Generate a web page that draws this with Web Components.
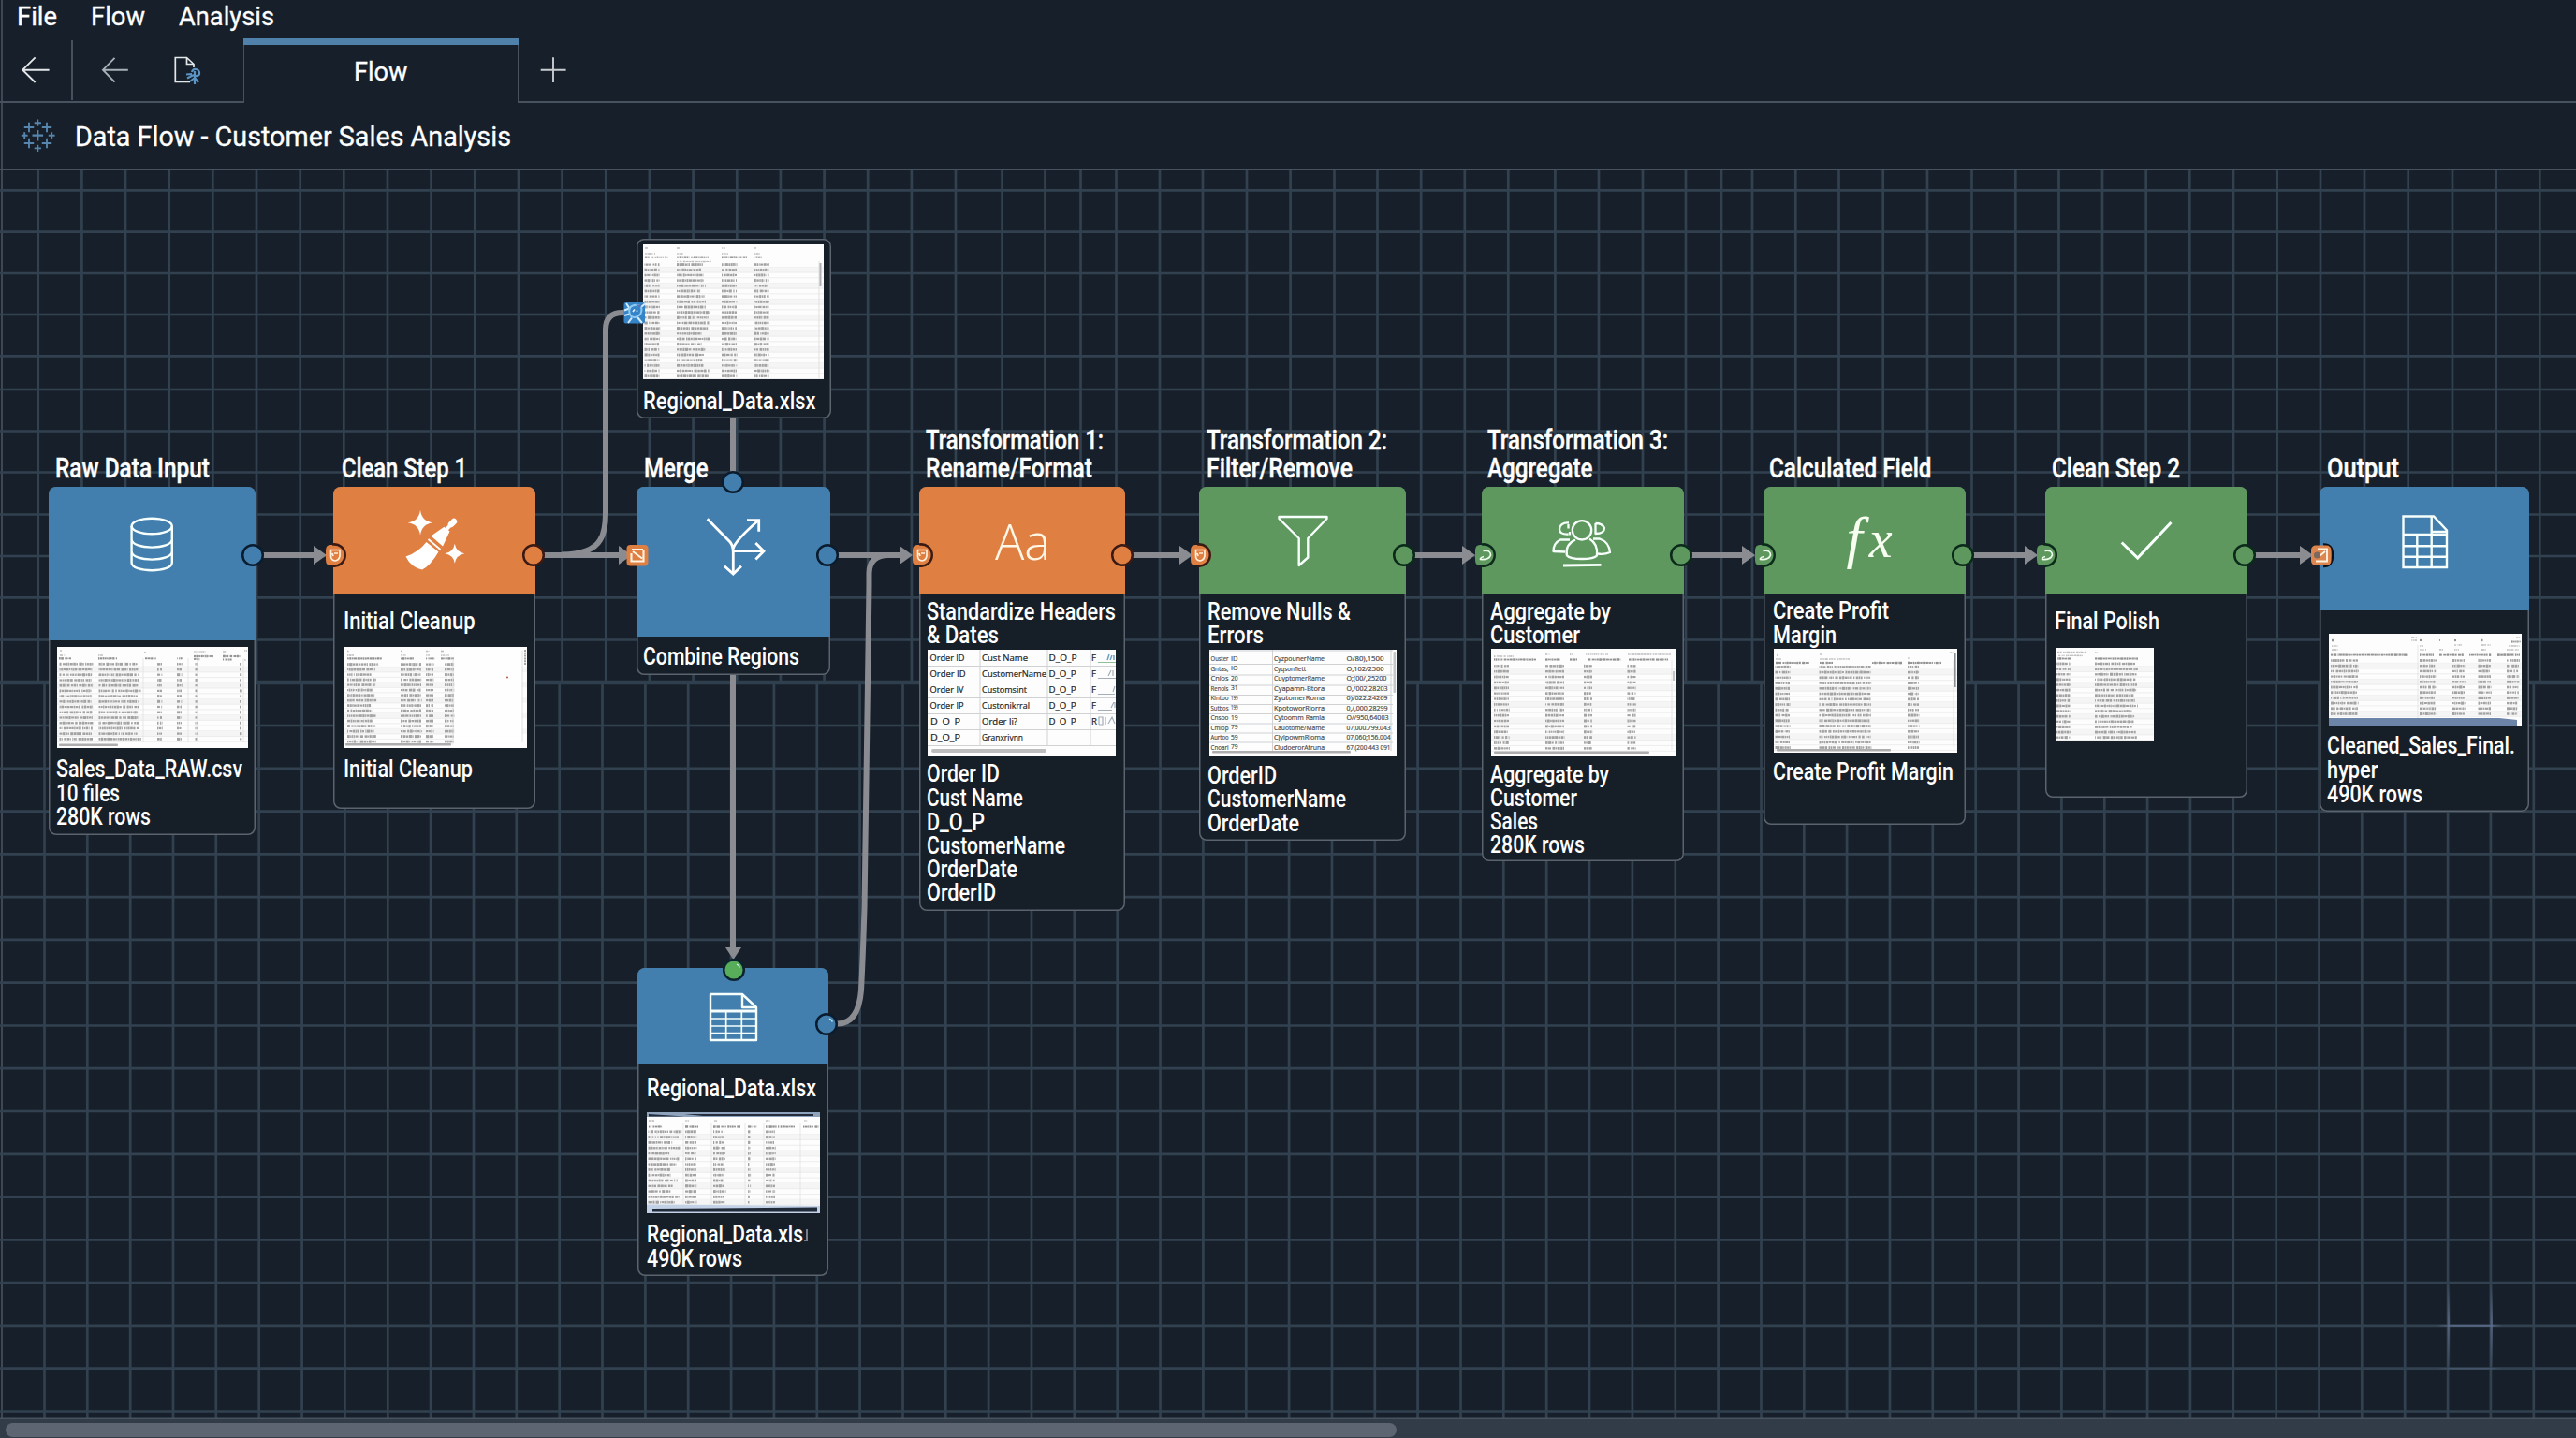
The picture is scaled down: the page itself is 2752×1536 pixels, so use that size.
<!DOCTYPE html>
<html lang="en">
<head>
<meta charset="utf-8">
<title>Data Flow - Customer Sales Analysis</title>
<style>
html,body{margin:0;height:100%;background:#17202a;overflow:hidden}
body{font-family:Roboto,"Liberation Sans",sans-serif;color:#fff}
</style>
</head>
<body>
<flow-app></flow-app>
<script>
const define = (name, cls) => customElements.define(name, cls);
const BLUE = '#427fae', ORANGE = '#e07f42', GREEN = '#5e985e', WIRE = '#8b8c92';

/* One line of text condensed to a given width */
define('fit-line', class extends HTMLElement {
  connectedCallback() {
    if (this.shadowRoot) return;
    this.attachShadow({mode: 'open'}).innerHTML = `<style>
      :host{display:block;white-space:pre;width:0}
      span{display:inline-block;transform-origin:0 50%;margin-left:-1px}
    </style><span><slot></slot></span>`;
    const w = +this.getAttribute('w');
    const span = this.shadowRoot.querySelector('span');
    const natural = span.getBoundingClientRect().width;
    if (w && natural) span.style.transform = `scaleX(${(w + 2) / natural})`;
    this.style.width = w + 'px';
  }
});

define('menu-bar', class extends HTMLElement {
  connectedCallback() {
    this.attachShadow({mode: 'open'}).innerHTML = `<style>
      :host{display:flex;height:41px;box-sizing:border-box;padding:2.6px 0 0 18.5px;gap:38px;font-size:27.5px;line-height:30px;-webkit-text-stroke:.3px #fff}
    </style><fit-line w="41">File</fit-line><fit-line w="56">Flow</fit-line><fit-line w="100">Analysis</fit-line>`;
  }
});

define('tab-strip', class extends HTMLElement {
  connectedCallback() {
    this.attachShadow({mode: 'open'}).innerHTML = `<style>
      :host{display:flex;height:69px;box-sizing:border-box}
      .cell{box-sizing:border-box;border-bottom:2px solid #48525e;display:flex}
      .tools{width:260px}
      .tab{width:294px;box-sizing:border-box;border:solid #48525e;border-width:0 1.5px;display:flex;flex-direction:column;align-items:center}
      .bar{height:7px;width:294px;background:#4f81ab;flex:none}
      .rest{flex:1}
      fit-line{font-size:27.5px;line-height:30px;margin-top:14px;-webkit-text-stroke:.3px #fff}
      svg{display:block}
    </style>
    <div class="cell tools"><svg width="260" height="67" viewBox="0 41 260 67" fill="none" stroke="#e4e7ea" stroke-width="1.9">
      <path d="M52.6 74.7H24.5M37.6 61.3L24.2 74.7L37.6 88"/>
      <path stroke="#a9b0b7" d="M136.8 74.7H110.5M122.5 61.8L110 74.7L122.5 87.7"/>
      <path stroke="#4a545f" d="M77 43V107"/>
      <path stroke-width="1.7" d="M203 87.5H187.3V61.5H199.5L207 68.5V72M199.5 61.5V68.5H207"/>
      <g stroke="#5a93c4" stroke-width="2.2"><path d="M205 77Q206 73.500 209.500 74Q213.500 75 213 79Q212 81.500 208.500 81"/><path d="M208 76V90M208 83L203 87M208 83L212 88M199 79.5L205 79M200 83.5L207 80"/></g>
    </svg></div>
    <div class="tab"><div class="bar"></div><fit-line w="55.5">Flow</fit-line></div>
    <div class="cell rest"><svg width="60" height="67" viewBox="554 41 60 67" fill="none" stroke="#c9cdd2" stroke-width="1.9"><path d="M577.7 74.7H604.6M591 61.3V88"/></svg></div>`;
  }
});

define('title-bar', class extends HTMLElement {
  connectedCallback() {
    const plus = (x, y, r, s) => `<path stroke-width="${s}" d="M${x - r} ${y}H${x + r}M${x} ${y - r}V${y + r}"/>`;
    this.attachShadow({mode: 'open'}).innerHTML = `<style>
      :host{display:flex;height:72px;box-sizing:border-box;border-bottom:2px solid #48525e;padding-left:22px}
      svg{display:block}
      fit-line{font-size:29.500px;line-height:34px;margin:18.600px 0 0 21px;-webkit-text-stroke:.3px #fff}
    </style><svg width="38" height="70" viewBox="22 110 38 70" stroke="#5685ad">
      ${plus(40.3, 144.7, 5.8, 2.2)}${plus(31, 136, 5.2, 1.9)}${plus(50, 136, 5.2, 1.9)}${plus(31, 153, 5.2, 1.9)}${plus(50, 153, 5.2, 1.9)}
      ${plus(40.3, 131.2, 3.6, 1.9)}${plus(40.3, 158.4, 3.6, 1.9)}${plus(26.2, 144.7, 3.4, 1.9)}${plus(55.2, 144.7, 3.4, 1.9)}
    </svg><fit-line w="464">Data Flow - Customer Sales Analysis</fit-line>`;
  }
});

/* Miniature data grid: rows of illegible cells, or real text cells */
define('data-thumb', class extends HTMLElement {
  set spec(s) {
    let seed = s.w * 7 + s.h * 13;
    const rnd = () => (seed = (seed * 16807) % 2147483647) / 2147483647;
    const scribble = (x, y, w, c = '#a3a3a3', h = 3) => {
      let out = '', p = x;
      while (p < x + w) {
        const g = Math.min(0.8 + rnd() * 2.6, x + w - p);
        const hh = h * (0.7 + rnd() * 0.35);
        out += `<rect x="${p.toFixed(1)}" y="${(y - hh / 2).toFixed(1)}" width="${Math.max(g, 0.8).toFixed(1)}" height="${hh.toFixed(1)}"/>`;
        p += g + 0.5 + (rnd() > 0.85 ? 0.9 : 0);
      }
      return `<g fill="${c}">${out}</g>`;
    };
    let g = '';
    if (s.text) {
      g += s.lines.map(l => `<path stroke="#cfd1d3" stroke-width="1" d="${l}"/>`).join('');
      g += s.text.map(([x, y, t, w]) => `<text x="${x}" y="${y}" ${w ? `textLength="${w}" lengthAdjust="spacingAndGlyphs"` : ''} ${s.fs === 8 && w > 46 && x > 100 ? 'style="font-size:7px"' : ''}>${t}</text>`).join('');
    } else {
      for (let i = 0; i < s.n; i++) {
        const y = s.y + i * s.p;
        if (i % 3 === 1) g += `<rect y="${y - s.p / 2}" width="${s.w}" height="${s.p}" fill="#f5f5f6"/>`;
        g += `<path stroke="#e6e7e8" stroke-width=".7" d="M0 ${y + s.p / 2}H${s.gw || s.w}"/>`;
        for (const [x, w, v] of s.cols) g += scribble(x, y, w - (v ? rnd() * v : 0));
      }
      for (const [x, y, w] of s.head) g += scribble(x, y, w, '#929292', 2.4);
      for (const [x, y, w] of s.sub || []) g += scribble(x, y, w, '#bdbdbd', 1.6);
      for (const x of s.v || []) g += `<path stroke="#dfe1e2" stroke-width=".8" d="M${x} 12V${s.h - 6}"/>`;
    }
    g += s.extra || '';
    this.attachShadow({mode: 'open'}).innerHTML = `<style>
      :host{display:block;flex:none;width:${s.w}px;height:${s.h}px;background:#fdfdfd}
      svg{display:block} text{font-family:"Open Sans","Liberation Sans",sans-serif;font-weight:500;font-size:${s.fs || 10}px;fill:${s.ink || '#222'};stroke:${s.ink || '#222'};stroke-width:.2px}
    </style><svg width="${s.w}" height="${s.h}">${g}</svg>`;
  }
});

/* Connection port at the edge of a node */
define('flow-port', class extends HTMLElement {
  connectedCallback() {
    const k = this.getAttribute('kind'), c = this.getAttribute('color') || BLUE;
    const dark = {[ORANGE]: '#3a1a14', [GREEN]: '#0c2a1b', [BLUE]: '#0b1c2e'}[c] || '#0c2430';
    let g;
    if (k === 'out') g = `<circle cx="14" cy="14" r="10.8" fill="${c}" stroke="${dark}" stroke-width="2.5"/>`;
    if (k === 'gloss') g = `<circle cx="14" cy="14" r="10.8" fill="${c}" stroke="${dark}" stroke-width="2.5"/><path d="M17 8.200Q19.500 9 20.300 11.500" fill="none" stroke="#d8f0e8" stroke-width="1.4"/>`;
    if (k === 'tile') g = `<rect x="2.500" y="3" width="23" height="22.500" rx="4" fill="${c}"/><path d="M7.500 12V20.500H20.500V8M8 8L18 8M9 10L19 17.500M20 8L12 8" fill="none" stroke="#fff3e2" stroke-width="2.1"/>`;
    if (k === 'tile2') g = `<path d="M16 2.500Q26 2 26 14T16 26" fill="none" stroke="#0c1016" stroke-width="2.5"/><rect x="3" y="3.500" width="21.500" height="21.500" rx="5" fill="#dd8650"/><path d="M10 7.500H20V20.500H8M12 15L18 10" fill="none" stroke="#fff3e2" stroke-width="1.900"/><circle cx="9.500" cy="14" r="3.600" fill="#7c6a60"/>`;
    if (k === 'join') g = `<rect x="2.500" y="3" width="22.500" height="22.500" rx="2" fill="#3584c8"/><g fill="none" stroke="#d4ecfb" stroke-width="2"><path d="M3 11.500L8.500 9.500L5 4M3 17L8.500 15.500M11 19.500L7 25M17 19L22 25M21 8L25 4.500"/><path d="M8.500 9Q13 4 19 6.500Q23 9 20.500 15Q16 21 10.500 18Q7.500 15 8.500 9" stroke="#8fcaf2"/></g><path d="M15 5L21 6L20 9Z" fill="#5a6fb8"/><path d="M12 13L14 10.500M16.500 11.500V13" stroke="#e6f5ff" stroke-width="1.600"/>`;
    if (k === 'in') {
      const glyph = c === ORANGE ? '<path d="M8.500 8.500H18V15Q17 19.500 13 20Q8.500 19.500 8.500 15ZM12 12H16M10 12L11 15" fill="none" stroke="#fff0dc" stroke-width="1.700"/>'
        : '<path d="M11.500 9.500Q19.500 8 19.500 14Q17.500 19.500 8 18.500M8 18.500Q9 16 12 15.500" fill="none" stroke="#f0ffee" stroke-width="1.700"/>';
      g = `<path d="M14 3H8Q3 3 3 9V19Q3 25 8 25H14A11 11 0 0 0 14 3Z" fill="${c}"/><path d="M10 2.600A11.600 11.600 0 1 1 10 25.400" fill="none" stroke="${dark}" stroke-width="2.500"/>${glyph}`;
    }
    this.attachShadow({mode: 'open'}).innerHTML = `<style>
      :host{display:block;position:absolute;width:28px;height:28px;transform:translate(-50%,-50%)} svg{display:block}
    </style><svg width="28" height="28">${g}</svg>`;
  }
});

/* Node: caption lines above a card with a coloured head and a body */
define('flow-node', class extends HTMLElement {
  set spec(s) {
    const capTop = s.title ? s.title[0][2] - 24 : s.top;
    let y = capTop, html = '';
    for (const [t, w, base] of s.title || []) {
      html += `<fit-line class="cap" w="${w}" style="margin-top:${base - 24 - y}px;margin-left:${s.tx - s.x}px">${t}</fit-line>`;
      y = base + 6;
    }
    const cardGap = s.top - y;
    y = s.top + s.hh;
    let body = '';
    for (const it of s.items) {
      if (it.w) { body += `<data-thumb style="margin-top:${it.top - y}px;margin-left:${it.x - s.x - 1.5}px"></data-thumb>`; y = it.top + it.h; }
      else { body += `<fit-line w="${it[1]}" style="margin-top:${it[2] - 20.5 - y}px;margin-left:${(it[3] || s.bx) - s.x - 1.5}px">${it[0]}</fit-line>`; y = it[2] + 5.5; }
    }
    const root = this.attachShadow({mode: 'open'});
    root.innerHTML = `<style>
      :host{position:absolute;left:${s.x}px;top:${capTop}px;width:${s.w}px;display:flex;flex-direction:column}
      .cap{font-size:29px;line-height:30px;font-weight:500;-webkit-text-stroke:.4px #fff}
      .card{margin-top:${cardGap}px;height:${s.bottom - s.top}px;box-sizing:border-box;border-radius:8px;background:#161e28;box-shadow:inset 0 0 0 1.5px #5b646e;overflow:hidden}
      .head{height:${s.hh}px;background:${s.color}}
      .head svg{display:block}
      .body{display:flow-root;padding-left:1.5px;font-size:25.5px;line-height:26px;font-weight:500}
    </style>${html}<div class="card">${s.hh ? `<div class="head"><svg width="${s.w}" height="${s.hh}" viewBox="${s.x} ${s.top} ${s.w} ${s.hh}" fill="none" stroke="#f6fffb" stroke-width="2.4" stroke-linejoin="round">${s.icon}</svg></div>` : ''}<div class="body">${body}</div></div>`;
    const specs = s.items.filter(i => i.w);
    root.querySelectorAll('data-thumb').forEach((e, i) => e.spec = specs[i]);
  }
});

const star = (x, y, r) => `<path fill="#fff" stroke="none" d="M${x} ${y - r}Q${x + 1.500} ${y - 1.500} ${x + r} ${y}Q${x + 1.500} ${y + 1.500} ${x} ${y + r}Q${x - 1.500} ${y + 1.500} ${x - r} ${y}Q${x - 1.500} ${y - 1.500} ${x} ${y - r}Z"/>`;
const shade = (x, y, w) => `<rect x="${x}" y="${y}" width="${w}" height="2.4" rx="1" fill="#adadad"/>`;

const nodes = [
  {x: 51.5, w: 221, top: 520, hh: 164, bottom: 892, color: BLUE, tx: 60, bx: 60.5, title: [['Raw Data Input', 163, 509.3]],
   icon: '<ellipse cx="161.700" cy="562" rx="21.600" ry="8.300"/><path d="M140.100 562V601C140.100 612 183.300 612 183.300 601V562M140.100 576C140.100 587.500 183.300 587.500 183.300 576M140.100 589C140.100 600.500 183.300 600.500 183.300 589"/>',
   items: [
    {w: 204, h: 108, x: 60.5, top: 691, y: 18.3, p: 5.72, n: 15, cols: [[2.5, 36, 2], [44.5, 46, 5], [107, 5], [128, 5], [147.5, 2.6], [195, 1.8]], v: [92, 140, 150, 199],
     head: [[2, 12.3, 13], [44, 12.3, 20], [94, 12.3, 12], [128, 12.3, 7], [146, 10, 21], [177, 10, 20], [146, 13, 6], [177, 13.5, 10]], sub: [[3, 4, 2], [3, 9, 5], [44, 9, 5], [93, 6, 2], [146, 5, 12], [177, 5, 4], [200, 4, 3], [200, 14, 3]], extra: shade(2, 103.5, 63)},
    ['Sales_Data_RAW.csv', 197, 828.3], ['10 files', 66, 854.3], ['280K rows', 99, 879.5]]},
  {x: 356, w: 216, top: 520, hh: 114, bottom: 864.5, color: ORANGE, tx: 366, bx: 367.5, title: [['Clean Step 1', 132, 509.3]],
   icon: star(449, 558.3, 13.5) + star(485.8, 591.3, 10.5) + '<g fill="#fff" stroke="none"><path d="M455.500 579Q447 590 433.500 594.500Q439 606 451 608.500Q460 604 468.500 589.500Z"/><path d="M460.500 572.500L474.500 562.700L480.500 567.500L473 583.500Z"/></g><path stroke="#fff" stroke-width="1.800" d="M457.500 576L470.500 587"/><path stroke="#fff" stroke-width="6.500" stroke-linecap="round" d="M482 560L485 557"/><path stroke="#fff" stroke-width="4" d="M477 565.500L483 559"/>',
   items: [['Initial Cleanup', 138.5, 671],
    {w: 196, h: 107.5, x: 366.5, top: 691.5, y: 18.6, p: 5.5, n: 16, gw: 118, cols: [[4, 33, 9], [61, 22], [88, 8], [108, 10]], head: [[4, 12.4, 37], [61, 12.4, 14], [88, 12.4, 9], [104, 12.4, 14]], sub: [[4, 9, 7], [61, 9, 6], [88, 9, 4], [104, 9, 9], [4, 4.5, 1.5], [61, 4.5, 1.5], [88, 4.5, 3], [104, 4.5, 3]],
     extra: '<rect x="118.500" y="1" width="72" height="101" fill="#fefefe"/>' + shade(2, 103, 113) + '<path stroke="#d8dadb" stroke-width=".8" d="M117 14V103M191 4V102"/><path stroke="#888" stroke-width="1.500" stroke-dasharray="2 .8" d="M194 3V19"/><circle cx="175" cy="32.500" r="1" fill="#b2543c"/>'},
    ['Initial Cleanup', 136, 829]]},
  {x: 680, w: 208, top: 255, hh: 0, bottom: 446.5, bx: 688,
   items: [
    {w: 193, h: 143.5, x: 687.3, top: 261, y: 21.6, p: 5.67, n: 22, cols: [[1.5, 16], [36, 37, 12], [84, 16], [118.5, 16]], head: [[2, 13.7, 24], [36, 13.7, 33], [84, 13.7, 27], [118, 13.7, 9]], sub: [[2, 10, 11], [36, 10, 7], [84, 10, 7], [118, 10, 7], [2, 4, 3], [36, 4, 3], [84, 4, 3], [118, 4, 3], [36, 18.5, 37]],
     extra: '<path stroke="#e0e1e2" d="M188 18V143"/><path stroke="#aeb0b3" stroke-width="2" d="M189.500 20V45"/>'},
    ['Regional_Data.xlsx', 182.5, 435.3]]},
  {x: 680, w: 206.5, top: 520, hh: 160, bottom: 720.5, color: BLUE, tx: 689, bx: 688, title: [['Merge', 66.5, 509]],
   icon: '<g stroke-width="2.800" stroke="#fff" stroke-linejoin="miter"><path d="M755.700 554.300L780 579Q783.300 583 783.300 590V612M783.300 588.700H815M783.300 586Q785 578 810 556"/><path d="M774 604.700L783.300 613L792 604.700M807.300 580L816 588.700L807.300 597.500M798 555.700H810.700V567.700"/></g>',
   items: [['Combine Regions', 165, 708]]},
  {x: 681, w: 204, top: 1034, hh: 103, bottom: 1362.5, color: BLUE, bx: 691.7,
   icon: '<path d="M759 1062H793L808 1076V1111H759ZM793 1062V1076H808"/><path stroke-width="2.800" d="M759 1080H808"/><path stroke-width="1.700" d="M759 1088H808M759 1096H808M759 1103.500H808M775.700 1080V1111M792.300 1080V1111"/>',
   items: [['Regional_Data.xlsx', 179, 1169],
    {w: 185, h: 108, x: 691, top: 1187.5, y: 20.8, p: 5.8, n: 14, cols: [[1.5, 36, 14], [41, 12], [71, 13, 2], [108, 2.4], [127, 10]], v: [39, 69, 105, 125, 164], head: [[2, 15.5, 14], [41, 15.5, 14], [71, 15.5, 29], [108, 15.5, 9], [127, 15.5, 31], [167, 15.5, 16]], sub: [[2, 9, 6], [41, 9, 3], [72, 9, 3], [127, 9, 4], [168, 9, 3]],
     extra: '<rect width="185" height="5" fill="#8fa3bd"/><path d="M2 2L40 4.500H2ZM40 2H178V4H60Z" fill="#222c3a"/><path d="M0 98.500L185 100V108H0Z" fill="#c3d1e6"/><path d="M6 103L182 101.500V106.500H6Z" fill="#202a38"/>'},
    ['Regional_Data.xls', 165, 1325], ['490K rows', 100, 1351]]},
  {x: 981.5, w: 220, top: 520, hh: 114, bottom: 973, color: ORANGE, tx: 989.5, bx: 990.7, title: [['Transformation 1:', 188, 478.6], ['Rename/Format', 176, 509]],
   icon: '<text x="1062.500" y="597.700" textLength="59" lengthAdjust="spacingAndGlyphs" stroke="none" fill="#fff7e6" font-family="Open Sans,Lato,sans-serif" font-weight="300" font-size="53">Aa</text>',
   items: [['Standardize Headers', 200, 660.5], ['&amp; Dates', 75, 685.7],
    {w: 201.5, h: 113, x: 990.7, top: 694, fs: 9.6,
     lines: ['M0 17.500H201M0 34.500H201M0 51.500H201M0 68.500H201M0 85.500H201M0 102.500H201', 'M56 0V102M128 0V102M174 0V102'],
     text: [[2.5, 12, 'Order ID', 37], [58, 12, 'Cust Name', 49], [129.5, 12, 'D_O_P', 30], [175, 12, 'F'],
      [2.5, 29, 'Order ID', 38], [58, 29, 'CustomerName', 69], [129.500, 29, 'D_O_P', 29], [175, 29, 'F'],
      [2.5, 46, 'Order IV', 36], [58, 46, 'Customsint', 48], [129.500, 46, 'D_O_P', 29], [175, 46, 'F'],
      [2.5, 63, 'Order IP', 36], [58, 63, 'Custonikrral', 51], [129.500, 63, 'D_O_P', 29], [175, 63, 'F'],
      [3, 80, 'D_O_P', 32], [58, 80, 'Order li?', 38], [129.500, 80, 'D_O_P', 29], [175, 80, 'R'],
      [3, 97, 'D_O_P', 32], [58, 97, 'Granxrivnn', 44]],
     extra: '<g fill="none" stroke="#a5adb8"><path stroke="#8fbf97" d="M182 13.500H201"/><path d="M182 30.500H201M182 47.500H200M182 64.500H197M180 81.500H201"/><path stroke="#6d9fc0" stroke-width="1.500" d="M192 11L194 5M195 11L197 6M199 11V6"/><path d="M193 28L196 22M198 28V22M198 45L200 39M196 62L199 56M200 62V56M183 80V72H187V80H183M190 72V80M193 79L197 72L200 79" stroke-width="1.200"/></g><rect x="4" y="106" width="123" height="4" rx="2" fill="#bdbdbd"/>'},
    ['Order ID', 76, 834], ['Cust Name', 101, 860], ['D_O_P', 60, 885.5], ['CustomerName', 146, 911], ['OrderDate', 95, 936], ['OrderID', 72, 961]]},
  {x: 1281, w: 220.5, top: 520, hh: 114, bottom: 898.500, color: GREEN, tx: 1290, bx: 1291.3, title: [['Transformation 2:', 191, 478.8], ['Filter/Remove', 154, 509]],
   icon: '<path d="M1366.500 552H1417.500V554L1397.300 575V595.500L1387.700 604V575L1366.500 554Z"/>',
   items: [['Remove Nulls &amp;', 151, 660.7], ['Errors', 58, 686],
    {w: 200.5, h: 113, x: 1291.700, top: 694, fs: 8, ink: '#4a4a4a',
     lines: ['M0 15.500H196M0 27H196M0 38H196M0 48.500H196M0 58.500H196M0 68.500H196M0 79H196M0 89H196M0 99H196', 'M67.500 0V108M194 0V108M0 1H196'],
     text: [['Ouster', 'ID', 'CyzpounerName', 'O/80),1500', 40], ['Gntas;', 'IO', 'Cyqsonfiett', 'O,102/2500', 40], ['Cnios', '20', 'CuyptomerRame', 'O;(00/,25200', 43], ['Renois', '31', 'Cyapamn-Btora', 'O,/002,28203', 44], ['Kintoo', '199', 'ZyutomerRoma', '0)/022.24269', 44], ['Sutbos', '199', 'KpotoworRlorra', '0,/,000,28299', 44], ['Cnsoo', '19', 'Cytoomm Ramia', 'O//950,64003', 45], ['Cmiop', '79', 'Cauotome/Mame', '07,000.799.043', 47], ['Aurtoo', '59', 'CjyipowmRloma', '07,060;156.004', 47], ['Cnoari', '79', 'CludoerorAtruna', '67.(200 443 091', 47]]
      .flatMap(([a, b, c, d, w], i) => { const y = 12 + i * 10.5; return [[1.500, y, a, 19], [23, y - .5, b, 7.500], [69, y, c, i === 1 ? 34 : 54], [146.500, y, d, w]]; }),
     extra: shade(3, 108, 148) + '<rect x="196.500" y="2" width="2.600" height="44" rx="1" fill="#c3c5c7"/>'},
    ['OrderID', 72, 835.7], ['CustomerName', 146, 861], ['OrderDate', 96, 886.7]]},
  {x: 1583, w: 216, top: 520, hh: 114, bottom: 920, color: GREEN, tx: 1590, bx: 1593, title: [['Transformation 3:', 191, 478.8], ['Aggregate', 110.500, 509]],
   icon: '<g stroke-width="2.300"><circle cx="1690" cy="566.300" r="10.200"/><path d="M1676 558.500Q1667 558 1666 565Q1666 571 1675.500 570.500M1675.500 560V564.500M1677 568V571.500"/><path d="M1704.500 559V570Q1714 570 1714 564Q1712 559 1704.500 559"/><path d="M1683 576.500Q1671.500 582 1674 593.500Q1677 597 1690 597Q1703 597 1706 593.500Q1707.500 581 1698 575.500"/><path d="M1677 576.500H1667Q1659.500 580 1659.500 589L1672 589.500M1702 575.500H1709Q1719 579 1720 590Q1714 592.500 1707 591.500"/><path stroke-width="2.800" d="M1670 604L1710.500 603.400"/></g>',
   items: [['Aggregate by', 127, 660.7], ['Customer', 94, 686],
    {w: 197, h: 114, x: 1593, top: 692.7, y: 18.3, p: 5.87, n: 16, cols: [[3, 16], [58, 20], [99, 9], [145.500, 9]], v: [193], head: [[3, 11.5, 45], [58, 11.5, 15], [84, 11.5, 8], [103, 11.5, 35], [147, 11.5, 42]], sub: [[3, 8, 21], [58, 6, 4], [84, 6, 3], [101, 6, 24], [146, 6, 46]], extra: shade(3, 109.500, 166) + '<rect x="194" y="24" width="2" height="10" fill="#c5c5c8"/>'},
    ['Aggregate by', 125, 834.300], ['Customer', 91, 859.500], ['Sales', 49, 885], ['280K rows', 99, 910]]},
  {x: 1883.500, w: 216.500, top: 520, hh: 114, bottom: 880.700, color: GREEN, tx: 1891.300, bx: 1895, title: [['Calculated Field', 171.500, 509.300]],
   icon: '<text x="1972" y="595" stroke="none" fill="#f6fff0" font-family="Liberation Serif,serif" font-style="italic" font-size="62">f<tspan font-size="56" dx="7">x</tspan></text>',
   items: [['Create Profit', 122, 660], ['Margin', 66, 686],
    {w: 196.500, h: 110.700, x: 1894.700, top: 693, y: 19.3, p: 5.75, n: 16, cols: [[1.500, 15.5], [48.500, 55], [143, 12]], v: [192], head: [[2, 15, 35], [49, 15, 14], [105, 15, 32], [143, 15, 36]], sub: [[2, 11, 6], [49, 11, 32], [3, 7, 1.500], [49, 6, 2], [143, 10, 2], [188, 4, 3]], extra: shade(3, 107, 122) + '<path stroke="#888d94" stroke-width="1.600" d="M193.800 5V41"/>'},
    ['Create Profit Margin', 191, 831.700]]},
  {x: 2185, w: 215.500, top: 520, hh: 114, bottom: 852, color: GREEN, tx: 2193, bx: 2196, title: [['Clean Step 2', 135, 509.300]],
   icon: '<path stroke-width="3" stroke-linejoin="miter" d="M2266.700 579.500L2283.700 596L2319.500 558"/>',
   items: [['Final Polish', 110, 671],
    {w: 104.500, h: 99, x: 2196, top: 692, y: 17, p: 5.62, n: 15, cols: [[1, 14.500], [42, 46, 7]], head: [[2, 11.500, 14], [42, 11.500, 46]], sub: [[2, 4.500, 30], [3, 8.300, 25], [42, 5, 2]]}]},
  {x: 2478, w: 224, top: 520, hh: 132, bottom: 866.700, color: BLUE, tx: 2487, bx: 2487, title: [['Output', 75, 509.300]],
   icon: '<path stroke-linejoin="miter" d="M2567.500 551.500H2600L2614 566.500V606H2567.500ZM2597.700 551.500V606M2597.700 568H2614M2567.500 571H2614M2567.500 583.300H2614M2567.500 594.700H2614M2582.300 571V606"/>',
   items: [
    {w: 205.500, h: 99, x: 2488, top: 677, y: 28.500, p: 5.700, n: 11, cols: [[2, 29], [97, 18, 2], [132, 13], [159.500, 13.500], [190, 14, 3]], v: [95],
     head: [[2, 22.600, 83], [97, 22.600, 15], [118, 22.600, 26], [150, 22.600, 24], [180, 22.600, 24], [3, 7, 2], [97, 7, 2], [118, 7, 1], [134, 7, 2], [163, 7, 1.500], [195, 8.500, 9]], sub: [[3, 13, 7], [3, 17, 6], [88, 4, 6], [88, 7, 6], [97, 13, 4], [97, 17, 7], [118, 17, 4], [134, 12, 8], [134, 17, 5], [163, 12, 9], [163, 17, 5], [192, 13, 11], [190, 17, 13], [200, 4, 4]],
     extra: '<path d="M0 90H182L201 92V99H0Z" fill="#6b84a8"/>'},
    ['Cleaned_Sales_Final.', 199, 804], ['hyper', 52.500, 829.300], ['490K rows', 100, 855]]}
];

const ports = [
  ['out', BLUE, 269.5, 593], ['in', ORANGE, 358.500, 593], ['out', ORANGE, 569.500, 593], ['tile', ORANGE, 680.500, 593], ['join', BLUE, 677.500, 334],
  ['out', BLUE, 783, 515], ['out', BLUE, 883.500, 593], ['gloss', '#57ad5a', 783.700, 1036.300], ['gloss', BLUE, 882.700, 1093.700],
  ['in', ORANGE, 986, 593], ['out', ORANGE, 1199, 593], ['in', ORANGE, 1283, 593], ['out', GREEN, 1499.700, 593],
  ['in', GREEN, 1586.500, 593], ['out', GREEN, 1796.300, 593], ['in', GREEN, 1885.500, 593], ['out', GREEN, 2097, 593],
  ['in', GREEN, 2186.500, 593], ['out', GREEN, 2398.300, 593], ['tile2', ORANGE, 2479.500, 593]
];

define('flow-canvas', class extends HTMLElement {
  connectedCallback() {
    const upper = [];
    for (let k = 0; k < 21; k++) upper.push(40.7 + 46.66 * k);
    upper.push(1021, 1070.6, 1116.5, 1154.5, 1192.5, 1239, 1285, 1332, 1378.6, 1425.5, 1471.5, 1518.2, 1564.8, 1611.3, 1661.4, 1708, 1755, 1801, 1839, 1872, 1918.3, 1964.5, 2011.7, 2059, 2106.5, 2153.3, 2199.5, 2246, 2292.7, 2339.3, 2386, 2432.7, 2479, 2526, 2572.7, 2620, 2666.7, 2713.3);
    const rows = [203.3, 247.6, 292, 336, 380.3, 416, 460.5, 504.5, 549.5, 594, 638.3, 683.5];
    for (let y = 775; y < 1510; y += 45.78) rows.push(y);
    let d = upper.map(x => `M${x.toFixed(1)} 182V729`).join('') + rows.map(y => `M0 ${y.toFixed(1)}H2752`).join('');
    for (let k = 1; k < 60; k++) d += `M${(1.6 + 45.85 * k).toFixed(1)} 730V1516`;
    const arrow = (x1, x2) => `<path d="M${x1} 593H${x2 + 2}"/><path d="M${x2} 583L${x2 + 14} 593L${x2} 603Z" fill="${WIRE}" stroke="none"/>`;
    const root = this.attachShadow({mode: 'open'});
    root.innerHTML = `<style>
      :host{display:block;height:1334px;position:relative;overflow:hidden}
      .plane{position:absolute;left:0;top:-182px;width:2752px;height:1516px}
      .plane>svg{display:block}
      .clip{position:absolute;left:859px;top:1313px;width:2px;height:12px;border:solid #77808a;border-width:0 2px 1.500px 0}
    </style><div class="plane"><svg width="2752" height="1516" fill="none">
      <defs>
        <linearGradient id="gv" gradientUnits="userSpaceOnUse" x1="0" y1="1370" x2="0" y2="1464"><stop offset="0" stop-color="#5a6b88" stop-opacity="0"/><stop offset=".45" stop-color="#5a6b88"/><stop offset="1" stop-color="#5a6b88" stop-opacity=".1"/></linearGradient>
        <linearGradient id="gh" gradientUnits="userSpaceOnUse" x1="2602" y1="0" x2="2674" y2="0"><stop offset="0" stop-color="#5a6b88" stop-opacity="0"/><stop offset=".25" stop-color="#66789a"/><stop offset=".8" stop-color="#66789a"/><stop offset="1" stop-color="#5a6b88" stop-opacity="0"/></linearGradient>
      </defs>
      <path stroke="#32414f" stroke-width="2.700" d="${d}"/>
      <path stroke="#303f4d" stroke-width="4.500" d="M0 729H2752"/>
      <g fill="url(#gv)" opacity=".8"><rect x="2614.700" y="1370" width="2.500" height="94"/><rect x="2660.500" y="1370" width="2.500" height="94"/></g>
      <g fill="url(#gh)" opacity=".7"><rect x="2602" y="1414.800" width="72" height="2"/><rect x="2602" y="1461" width="72" height="1.500" opacity=".5"/></g>
      <path stroke="#46525f" stroke-width="1.500" d="M0 1515.300H2752"/>
      <g stroke="${WIRE}" stroke-width="6">
        ${arrow(280, 335)}${arrow(580, 661)}${arrow(894, 961)}${arrow(1210, 1260)}${arrow(1511, 1562)}${arrow(1807, 1861)}${arrow(2108, 2163)}${arrow(2409, 2457)}
        <path d="M783 446V505M783 720V1014"/><path d="M775 1012L783.500 1025L792 1012Z" fill="${WIRE}" stroke="none"/>
        <path d="M600 592.500Q632 592 641 577Q647 568 647 548V352Q647 334 665 334H669"/>
        <path d="M894 1093.500Q917 1094 920 1058Q922 1020 923.500 970L928.500 625V612Q929 593 949 593"/>
      </g></svg><div class="nodes"></div><div class="clip"></div><div class="ports"></div></div>`;
    const host = root.querySelector('.nodes');
    for (const n of nodes) {
      const e = document.createElement('flow-node');
      host.append(e);
      e.spec = n;
    }
    root.querySelector('.ports').innerHTML = ports.map(([k, c, x, y]) => `<flow-port kind="${k}" color="${c}" style="left:${x}px;top:${y}px"></flow-port>`).join('');
  }
});

define('scroll-track', class extends HTMLElement {
  connectedCallback() {
    this.attachShadow({mode: 'open'}).innerHTML = `<style>
      :host{display:block;height:20px;box-sizing:border-box;background:#323c48;padding:4px 0 0 6px}
      div{width:1486px;height:15px;border-radius:8px;background:#5c6571}
    </style><div></div>`;
  }
});

define('flow-app', class extends HTMLElement {
  connectedCallback() {
    this.attachShadow({mode: 'open'}).innerHTML = `<style>
      :host{display:flex;flex-direction:column;width:2752px;height:1536px;background:linear-gradient(90deg,transparent 1px,#3d4854 1px,#3d4854 2.500px,transparent 2.500px),#17202a}
    </style><menu-bar></menu-bar><tab-strip></tab-strip><title-bar></title-bar><flow-canvas></flow-canvas><scroll-track></scroll-track>`;
  }
});
</script>
</body>
</html>
